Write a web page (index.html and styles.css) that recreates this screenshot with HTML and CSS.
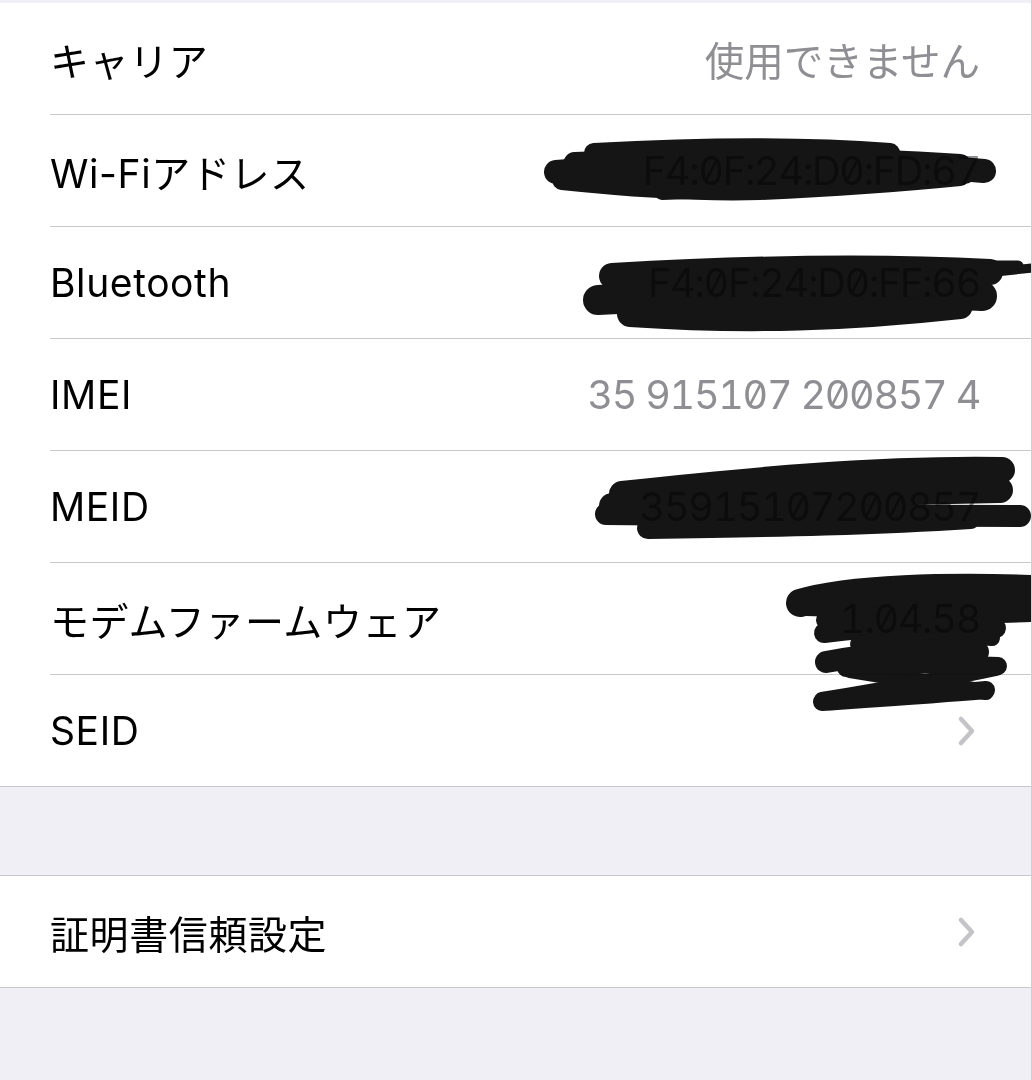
FILE: index.html
```html
<!DOCTYPE html>
<html lang="ja">
<head>
<meta charset="utf-8">
<title>情報</title>
<link rel="stylesheet" href="styles.css">
</head>
<body>
<div class="screen">
  <div class="group first">
    <div class="row"><div class="cell"><span class="label">キャリア</span><span class="value">使用できません</span></div></div>
    <div class="row"><div class="cell"><span class="label">Wi-Fiアドレス</span><span class="value mono">F4:0F:24:D0:FD:67</span></div></div>
    <div class="row"><div class="cell"><span class="label">Bluetooth</span><span class="value mono">F4:0F:24:D0:FF:66</span></div></div>
    <div class="row"><div class="cell"><span class="label">IMEI</span><span class="value mono">35 915107 200857 4</span></div></div>
    <div class="row"><div class="cell"><span class="label">MEID</span><span class="value mono">35915107200857</span></div></div>
    <div class="row"><div class="cell"><span class="label">モデムファームウェア</span><span class="value mono">1.04.58</span></div></div>
    <div class="row"><div class="cell last"><span class="label">SEID</span>
      <svg class="chevron" viewBox="0 0 20 32" width="20" height="32"><path d="M4 4 L15 16 L4 28" /></svg></div></div>
  </div>
  <div class="spacer"></div>
  <div class="group">
    <div class="row"><div class="cell last"><span class="label">証明書信頼設定</span>
      <svg class="chevron" viewBox="0 0 20 32" width="20" height="32"><path d="M4 4 L15 16 L4 28" /></svg></div></div>
  </div>

  <svg class="scribbles" viewBox="0 0 1032 1080" width="1032" height="1080">
    <g>
      <!-- Wi-Fi -->
      <path d="M556 172 C 700 160, 850 158, 984 171" stroke-width="24"/>
      <path d="M594 153 C 700 147, 800 146, 890 153" stroke-width="20"/>
      <path d="M575 164 C 700 158, 850 158, 960 166" stroke-width="24"/>
      <path d="M570 178 C 700 176, 850 174, 965 174" stroke-width="20"/>
      <path d="M562 180 C 620 186, 700 192, 760 190 C 850 186, 920 180, 960 176" stroke-width="20"/>
      <path d="M662 192 L 770 188" stroke-width="16"/>
      <!-- Bluetooth -->
      <path d="M612 276 C 750 268, 880 266, 990 272" stroke-width="26"/>
      <path d="M598 300 C 750 292, 880 290, 982 296" stroke-width="30"/>
      <path d="M630 314 C 750 322, 850 318, 960 306" stroke-width="26"/>
      <path d="M620 286 L 970 284" stroke-width="24"/>
      <path d="M876 266 L 1018 266" stroke-width="11"/>
      <path d="M866 279 C 950 276, 1000 272, 1032 268" stroke-width="9"/>
      <!-- MEID -->
      <path d="M622 494 C 750 480, 880 468, 1002 470" stroke-width="26"/>
      <path d="M612 506 C 750 498, 880 492, 1000 490" stroke-width="26"/>
      <path d="M606 514 C 750 516, 900 516, 1020 516" stroke-width="22"/>
      <path d="M648 528 C 780 526, 880 524, 970 518" stroke-width="22"/>
      <!-- Modem firmware -->
      <path d="M800 603 C 850 588, 950 586, 1032 589" stroke-width="28"/>
      <path d="M806 606 C 880 608, 960 604, 1032 602" stroke-width="20"/>
      <path d="M826 620 C 900 616, 980 614, 1032 612" stroke-width="20"/>
      <path d="M824 633 C 880 626, 950 624, 996 628" stroke-width="20"/>
      <path d="M858 644 C 900 636, 950 634, 992 638" stroke-width="16"/>
      <path d="M826 662 C 880 652, 940 648, 978 652" stroke-width="22"/>
      <path d="M846 668 C 900 664, 960 664, 998 666" stroke-width="18"/>
      <path d="M850 670 C 900 678, 950 686, 986 692" stroke-width="16"/>
      <path d="M996 668 C 940 680, 870 692, 822 700" stroke-width="16"/>
      <path d="M822 702 C 880 698, 940 694, 986 690" stroke-width="18"/>
    </g>
  </svg>
</div>
</body>
</html>
```
FILE: styles.css
```css
* { box-sizing: border-box; }
html, body { margin: 0; padding: 0; }
body {
  background: #f0eff5;
  font-family: "Inter", "Noto Sans CJK JP", sans-serif;
  -webkit-font-smoothing: antialiased;
}
.screen {
  position: relative;
  width: 1032px;
  height: 1080px;
  overflow: hidden;
  padding-top: 3px;
  border-right: 1px solid #cfcfd2;
}
.group {
  background: #ffffff;
  border-bottom: 1px solid #c8c7cc;
}
.spacer + .group { border-top: 1px solid #c8c7cc; }
.spacer { height: 88px; }
.row { padding-left: 50px; }
.cell {
  height: 112px;
  display: flex;
  align-items: center;
  justify-content: space-between;
  padding-right: 51px;
  border-bottom: 1px solid #c8c7cc;
}
.cell.last { border-bottom: none; height: 111px; padding-right: 54px; }
.label {
  color: #000;
  font-size: 39px;
  letter-spacing: 0.6px;
}
.value {
  color: #8e8e93;
  font-size: 39.5px;
}
.mono {
  font-feature-settings: "tnum" 1, "zero" 1;
  letter-spacing: -1.3px;
}
.chevron path {
  fill: none;
  stroke: #c4c4c8;
  stroke-width: 4.5;
  stroke-linecap: round;
  stroke-linejoin: round;
}
.scribbles {
  position: absolute;
  left: 0;
  top: 0;
  pointer-events: none;
  mix-blend-mode: multiply;
}
.scribbles path {
  fill: none;
  stroke: #151515;
  stroke-linecap: round;
  stroke-linejoin: round;
}
```
